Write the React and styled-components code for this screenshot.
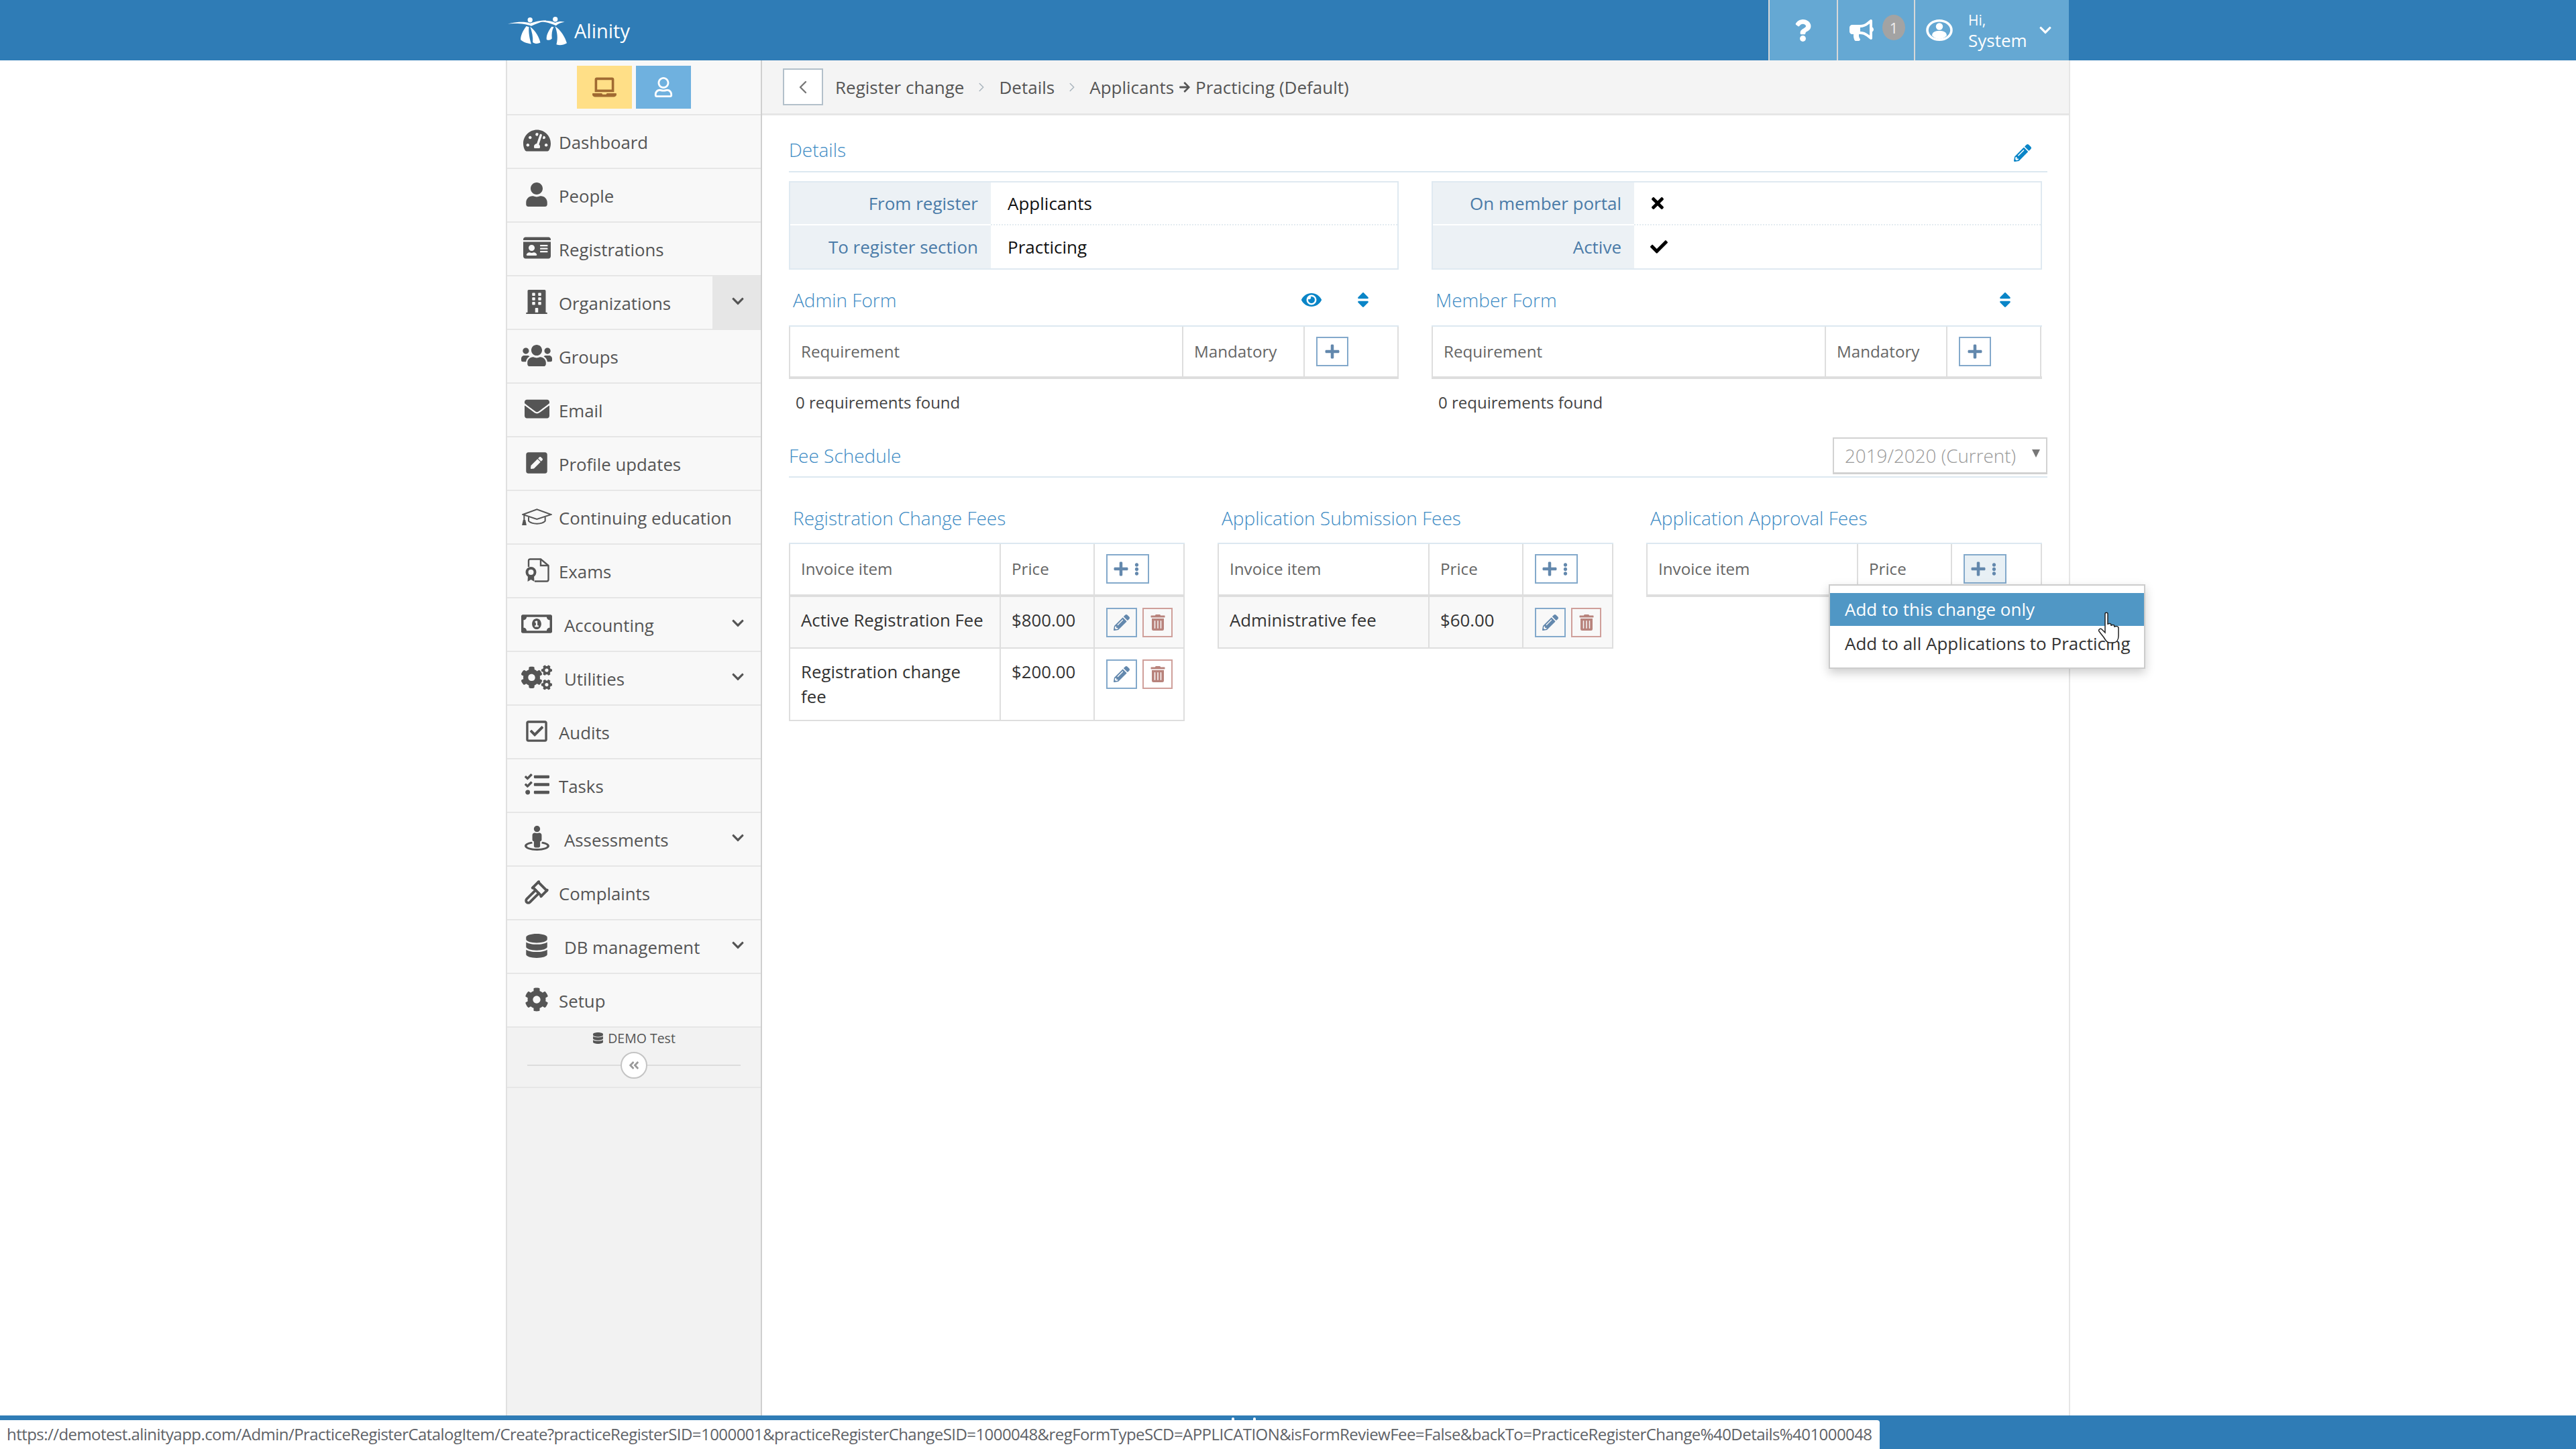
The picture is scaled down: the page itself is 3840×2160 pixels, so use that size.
import React from 'react'
import styled, { createGlobalStyle } from 'styled-components'
import {
  FaTachometerAlt, FaUser, FaIdCard, FaBuilding, FaUsers, FaEnvelope, FaPenSquare,
  FaRegMoneyBillAlt, FaCogs, FaRegCheckSquare, FaTasks, FaStreetView, FaDatabase, FaCog,
  FaQuestion, FaBullhorn, FaLaptop, FaRegUser, FaCheck, FaTimes, FaEye,
  FaSort, FaPencilAlt, FaPlus, FaEllipsisV, FaTrashAlt, FaChevronDown,
  FaAngleDoubleLeft, FaArrowRight,
} from 'react-icons/fa'
import { Gavel, ChevronLeft, ChevronRight } from 'lucide-react'

const GlobalStyle = createGlobalStyle`
  html, body {
    margin: 0;
    height: 2160px;
    overflow: hidden;
    background: #fff;
    font-family: "Open Sans", "Noto Sans", sans-serif;
    font-size: 26px;
    color: #333;
  }
  * { box-sizing: border-box; }
`

const Page = styled.div`
  display: flex;
  flex-direction: column;
  height: 2160px;
  position: relative;
`
const TopBar = styled.header`
  height: 90px;
  background: #2f7cb6;
  display: flex;
  justify-content: center;
`
const TopInner = styled.div`
  width: 2332px;
  display: flex;
  align-items: center;
  justify-content: space-between;
  padding-right: 2px;
`
const Brand = styled.div`
  display: flex;
  align-items: center;
  gap: 11px;
  padding-left: 3px;
  color: #fff;
  font-size: 29px;
`
const TopTools = styled.div`
  display: flex;
  height: 90px;
  background: #65a8d3;
`
const TopTool = styled.div`
  width: ${p => p.$w}px;
  border-left: 2px solid #d8d8d8;
  display: flex;
  align-items: center;
  color: #fff;
  padding-left: ${p => p.$pad}px;
`
const Badge = styled.span`
  width: 34px;
  height: 38px;
  margin-left: 13px;
  margin-top: -8px;
  border-radius: 50%;
  background: #a3a3a3;
  color: #eee;
  font-size: 22px;
  display: flex;
  align-items: center;
  justify-content: center;
`
const Greeting = styled.div`
  margin-left: 23px;
  width: 105px;
  line-height: 30px;
  font-size: 26px;
  small {
    display: block;
    font-size: 21px;
  }
`
const Body = styled.div`
  flex: 1;
  display: flex;
  justify-content: center;
  min-height: 0;
`
const Shell = styled.div`
  width: 2332px;
  display: flex;
`
const Sidebar = styled.nav`
  width: 382px;
  background: #f2f2f2;
  border-left: 2px solid #e0e0e0;
  border-right: 2px solid #cfcfcf;
`
const ModeRow = styled.div`
  height: 82px;
  background: #f8f8f8;
  border-bottom: 2px solid #e6e6e6;
  display: flex;
  justify-content: center;
  gap: 6px;
  padding-top: 8px;
`
const ModeButton = styled.div`
  width: 82px;
  height: 64px;
  background: ${p => p.$bg};
  color: ${p => p.$fg};
  display: flex;
  align-items: center;
  justify-content: center;
`
const NavRow = styled.div`
  height: 80px;
  background: #f8f8f8;
  border-bottom: 2px solid #e6e6e6;
  display: flex;
  align-items: center;
  padding-left: 21px;
  color: #555;
  font-size: 25.8px;
`
const NavIcon = styled.span`
  width: 46px;
  display: flex;
  justify-content: center;
  align-items: center;
  flex: none;
  margin-top: -3px;
`
const NavLabel = styled.span`
  flex: 1;
  margin-top: 1px;
  margin-left: ${p => (p.$wide ? 18 : 10)}px;
`
const NavToggle = styled.span`
  width: 72px;
  height: 78px;
  display: flex;
  align-items: center;
  justify-content: center;
  padding-left: 4px;
  background: ${p => (p.$open ? '#e6e6e6' : 'transparent')};
  svg { width: 20px; height: 20px; margin-top: -4px; }
`
const SideFooter = styled.div`
  height: 90px;
  background: #f2f2f2;
  border-bottom: 2px solid #e6e6e6;
  display: flex;
  flex-direction: column;
  align-items: center;
  color: #555;
  font-size: 19.5px;
`
const DemoTag = styled.div`
  display: flex;
  align-items: center;
  gap: 6px;
  height: 30px;
`
const Collapse = styled.div`
  width: 318px;
  height: 2px;
  background: #dcdcdc;
  margin-top: 25px;
  display: flex;
  align-items: center;
  justify-content: center;
`
const CollapseKnob = styled.span`
  width: 40px;
  height: 40px;
  border: 2px solid #c4c4c4;
  border-radius: 50%;
  background: #fff;
  color: #999;
  display: flex;
  align-items: center;
  justify-content: center;
`
const Main = styled.main`
  width: 1950px;
  border-right: 2px solid #e6e6e6;
  background: #fff;
`
const Crumbs = styled.div`
  height: 82px;
  background: #f4f4f4;
  border-bottom: 3px solid #e6e6e6;
  display: flex;
  align-items: center;
  padding-left: 31px;
  color: #555;
`
const BackButton = styled.span`
  width: 60px;
  height: 55px;
  margin-right: 18px;
  border: 2px solid #b3c0ca;
  background: #fff;
  color: #777;
  display: flex;
  align-items: center;
  justify-content: center;
`
const CrumbSep = styled.span`
  width: 52px;
  display: flex;
  justify-content: center;
  color: #a9b4bd;
`
const CrumbArrow = styled.span`
  display: flex;
  margin: 0 7px;
  color: #555;
`
const Content = styled.div`
  padding-left: 40px;
  width: 1916px;
`
const SectionHead = styled.div`
  height: ${p => p.$h}px;
  border-bottom: 2px solid #dce8f0;
  display: flex;
  align-items: flex-end;
  justify-content: space-between;
  padding-bottom: ${p => p.$pb}px;
`
const SectionTitle = styled.h2`
  margin: 0;
  font-size: 28px;
  font-weight: 300;
  line-height: 36px;
  color: #3d8bc4;
`
const FeeScheduleTitle = styled(SectionTitle)`
  padding-bottom: 13px;
`
const EditLink = styled.span`
  color: #0a85c7;
  margin-right: 24px;
  display: flex;
`
const TwoCols = styled.div`
  width: 1868px;
  display: grid;
  grid-template-columns: 909px 910px;
  column-gap: 49px;
`
const InfoGrid = styled.div`
  margin-top: 13px;
  height: 132px;
  border: 2px solid #dfe9f1;
  display: grid;
  grid-template-columns: ${p => p.$label}px 1fr;
  grid-auto-rows: 1fr;
`
const InfoLabel = styled.div`
  background: #ecf1f5;
  color: #4a7ba8;
  text-align: right;
  padding-right: 19px;
  display: flex;
  align-items: center;
  justify-content: flex-end;
  border-bottom: ${p => (p.$last ? 'none' : '2px solid #fff')};
`
const InfoValue = styled.div`
  color: #111;
  padding-left: ${p => p.$pad || 24}px;
  display: flex;
  align-items: center;
  border-bottom: ${p => (p.$last ? 'none' : '2px dotted #e3ebf1')};
`
const SubHead = styled.div`
  height: ${p => p.$h}px;
  display: flex;
  align-items: center;
  justify-content: space-between;
  padding: ${p => p.$top || 0}px 0 0 6px;
`
const SubTools = styled.div`
  display: flex;
  align-items: center;
  color: #0a85c7;
`
const SubTool = styled.span`
  width: ${p => p.$w}px;
  display: flex;
  justify-content: center;
  margin-right: ${p => p.$mr || 0}px;
`
const DataTable = styled.div`
  border-top: 2px solid #dce8f0;
  position: relative;
`
const DataRow = styled.div`
  display: grid;
  grid-template-columns: ${p => p.$cols};
  min-height: ${p => p.$h}px;
  background: ${p => p.$bg || '#fff'};
  border-bottom: ${p => p.$rule}px solid #dedede;
`
const DataCell = styled.div`
  border-left: 2px solid #dedede;
  &:last-child { border-right: 2px solid #dedede; }
  padding: ${p => p.$py}px 16px 0 ${p => (p.$tools ? 17 : 16)}px;
  color: ${p => (p.$head ? '#666' : '#333')};
  line-height: 37px;
  font-size: ${p => (p.$head ? 24.2 : 25.8)}px;
  display: ${p => (p.$tools ? 'flex' : 'block')};
  gap: 8px;
`
const ToolButton = styled.span`
  width: ${p => p.$w}px;
  height: 44px;
  border: 2px solid ${p => (p.$danger ? '#cf9f9a' : '#83a9cb')};
  color: ${p => (p.$danger ? '#b8837c' : '#6388ad')};
  background: ${p => (p.$active ? '#e8f0f5' : 'transparent')};
  display: flex;
  align-items: center;
  justify-content: center;
  gap: 2px;
`
const CountText = styled.div`
  height: 68px;
  margin-bottom: 2px;
  display: flex;
  align-items: center;
  padding-left: 10px;
  font-size: 24px;
  color: #444;
`
const YearSelect = styled.div`
  width: 320px;
  height: 55px;
  margin-bottom: 3px;
  border: 2px solid #d2d2d2;
  border-bottom-width: 3px;
  color: #999;
  display: flex;
  align-items: center;
  justify-content: space-between;
  padding: 0 9px 0 16px;
  font-weight: 300;
  font-size: 27.8px;
  white-space: nowrap;
`
const SelectArrow = styled.span`
  width: 0;
  height: 0;
  border-left: 6px solid transparent;
  border-right: 6px solid transparent;
  border-top: 12px solid #777;
  margin-top: -6px;
`
const FeeGrid = styled.div`
  width: 1868px;
  display: grid;
  grid-template-columns: repeat(3, 590px);
  column-gap: 49px;
`
const Menu = styled.div`
  position: absolute;
  left: 272px;
  top: 60px;
  width: 472px;
  height: 126px;
  background: #fff;
  border: 2px solid #ccc;
  box-shadow: 0 6px 14px rgba(0, 0, 0, 0.2);
  padding-top: 11px;
  z-index: 3;
`
const MenuItem = styled.div`
  height: ${p => p.$h}px;
  padding-left: 22px;
  padding-bottom: 2px;
  display: flex;
  align-items: center;
  white-space: nowrap;
  background: ${p => (p.$active ? '#5097c5' : 'transparent')};
  color: ${p => (p.$active ? '#fff' : '#333')};
`
const Cursor = styled.svg`
  position: absolute;
  left: 399px;
  top: 39px;
  width: 36px;
  height: 48px;
`
const BottomBar = styled.footer`
  height: 50px;
  background: #2f7cb6;
  position: relative;
`
const FooterMark = styled.span`
  position: absolute;
  top: 3px;
  left: ${p => p.$x}px;
  width: 4px;
  height: 5px;
  border-radius: 2px 2px 0 0;
  background: #fff;
`
const StatusTip = styled.div`
  position: absolute;
  left: 0;
  bottom: 0;
  width: 2802px;
  height: 43px;
  padding-left: 10px;
  background: #fff;
  border-top-right-radius: 4px;
  color: #5f6368;
  font-size: 24px;
  letter-spacing: -0.56px;
  line-height: 42px;
  white-space: nowrap;
`

function AlinityLogo() {
  return (
    <svg width="88" height="45" viewBox="0 0 265 135" fill="#fff">
      <circle cx="100" cy="20" r="11" />
      <circle cx="213" cy="17" r="11" />
      <path d="M0 38C40 27 78 27 100 35C120 28 142 22 172 22L172 25C146 28 130 36 105 47C80 37 40 33 0 38Z" />
      <path d="M140 27C165 20 192 24 213 33C228 26 240 26 255 29C240 31 228 35 216 46C195 36 170 28 140 27Z" />
      <path d="M83 48C68 68 56 92 58 110C72 122 90 126 105 128C98 105 92 75 95 52Z" />
      <path d="M100 50C125 68 142 100 146 122C135 128 122 128 112 120C114 95 108 72 100 50Z" />
      <path d="M197 50C182 68 172 90 174 108C182 112 190 112 198 104C196 85 198 66 206 52Z" />
      <path d="M212 48C240 68 258 100 265 124C250 133 232 135 218 130C226 102 222 75 212 48Z" />
    </svg>
  )
}

function UserBadgeIcon() {
  return (
    <svg width="40" height="32" viewBox="0 0 40 32" fill="#fff">
      <ellipse cx="20" cy="16" rx="18" ry="14.2" fill="none" stroke="#fff" strokeWidth="3.6" />
      <circle cx="20" cy="10.5" r="5.2" />
      <path d="M9 24C9.5 18.5 14 17 20 17C26 17 30.5 18.5 31 24C28 27.5 24 29 20 29C16 29 12 27.5 9 24Z" />
    </svg>
  )
}

function CapIcon() {
  return (
    <svg width="45" height="28" viewBox="0 0 135 80" fill="none" stroke="#555" strokeWidth="6">
      <path d="M4 31L67 8L131 31L67 52Z" />
      <path d="M30 42V60C45 76 90 76 104 60V42" />
      <path d="M10 34V58" />
      <path d="M4 76L8 58H13L17 76Z" fill="#555" />
    </svg>
  )
}

function ExamIcon() {
  return (
    <svg width="37" height="36" viewBox="0 0 37 36" fill="none" stroke="#555" strokeWidth="2.4">
      <path d="M6 13V4C6 2.5 7 1.5 8.5 1.5H24L35.5 11V32C35.5 33.5 34.5 34.5 33 34.5H15" />
      <path d="M24 1.5V11H35.5" />
      <circle cx="9.5" cy="21" r="6" strokeWidth="4" />
      <path d="M5 26L4.5 35L9.5 32L14.5 35L14 26Z" fill="#555" stroke="none" />
    </svg>
  )
}

function HandCursor() {
  return (
    <Cursor viewBox="0 0 36 48">
      <path
        d="M11 3C11 0.5 15 0.5 15 3V19C15 17 20 17 20 19.5V21C20 19 25 19 25 21.5V23C25 21 31 21 31 24V36C31 42 28 46 23 46H18C14 46 12 43 9 38L2 29C0.5 26.5 4 24 6 26L11 31Z"
        fill="#fff"
        stroke="#222"
        strokeWidth="1.5"
      />
    </Cursor>
  )
}

const navItems = [
  { label: 'Dashboard', icon: <FaTachometerAlt size={41} /> },
  { label: 'People', icon: <FaUser size={36} /> },
  { label: 'Registrations', icon: <FaIdCard size={41} /> },
  { label: 'Organizations', icon: <FaBuilding size={36} />, toggle: 'open' },
  { label: 'Groups', icon: <FaUsers size={46} /> },
  { label: 'Email', icon: <FaEnvelope size={37} /> },
  { label: 'Profile updates', icon: <FaPenSquare size={36} /> },
  { label: 'Continuing education', icon: <CapIcon /> },
  { label: 'Exams', icon: <ExamIcon /> },
  { label: 'Accounting', icon: <FaRegMoneyBillAlt size={46} />, toggle: 'closed', wide: true },
  { label: 'Utilities', icon: <FaCogs size={46} />, toggle: 'closed', wide: true },
  { label: 'Audits', icon: <FaRegCheckSquare size={36} /> },
  { label: 'Tasks', icon: <FaTasks size={37} /> },
  { label: 'Assessments', icon: <FaStreetView size={37} />, toggle: 'closed', wide: true },
  { label: 'Complaints', icon: <Gavel size={38} strokeWidth={2.4} /> },
  { label: 'DB management', icon: <FaDatabase size={36} />, toggle: 'closed', wide: true },
  { label: 'Setup', icon: <FaCog size={36} /> },
]

const feeTables = [
  {
    title: 'Registration Change Fees',
    active: false,
    rows: [
      { name: 'Active Registration Fee', price: '$800.00', h: 77, bg: '#f8f8f8' },
      { name: 'Registration change fee', price: '$200.00', h: 108 },
    ],
  },
  {
    title: 'Application Submission Fees',
    active: false,
    rows: [{ name: 'Administrative fee', price: '$60.00', h: 77, bg: '#f8f8f8' }],
  },
  { title: 'Application Approval Fees', active: true, rows: [] },
]

const FEE_COLS = '314px 140px 136px'
const FORM_COLS = '586px 181px 142px'

function FormTable() {
  return (
    <>
      <DataTable>
        <DataRow $cols={FORM_COLS} $h={78} $rule={4}>
          <DataCell $head $py={18}>Requirement</DataCell>
          <DataCell $head $py={18}>Mandatory</DataCell>
          <DataCell $tools $py={15}>
            <ToolButton $w={48}><FaPlus size={24} /></ToolButton>
          </DataCell>
        </DataRow>
      </DataTable>
      <CountText>0 requirements found</CountText>
    </>
  )
}

function FeeTable({ table }) {
  return (
    <div>
      <SubHead $h={97} $top={23}>
        <SectionTitle>{table.title}</SectionTitle>
      </SubHead>
      <DataTable>
        <DataRow $cols={FEE_COLS} $h={79} $rule={4}>
          <DataCell $head $py={18}>Invoice item</DataCell>
          <DataCell $head $py={18}>Price</DataCell>
          <DataCell $tools $py={15}>
            <ToolButton $w={64} $active={table.active}>
              <FaPlus size={24} />
              <FaEllipsisV size={19} />
            </ToolButton>
          </DataCell>
        </DataRow>
        {table.rows.map(row => (
          <DataRow key={row.name} $cols={FEE_COLS} $h={row.h} $bg={row.bg} $rule={2}>
            <DataCell $py={16}>{row.name}</DataCell>
            <DataCell $py={16}>{row.price}</DataCell>
            <DataCell $tools $py={16}>
              <ToolButton $w={47}><FaPencilAlt size={24} /></ToolButton>
              <ToolButton $w={45} $danger><FaTrashAlt size={24} /></ToolButton>
            </DataCell>
          </DataRow>
        ))}
        {table.active && (
          <Menu>
            <MenuItem $active $h={49}>Add to this change only</MenuItem>
            <MenuItem $h={54}>Add to all Applications to Practicing</MenuItem>
            <HandCursor />
          </Menu>
        )}
      </DataTable>
    </div>
  )
}

export default function App() {
  return (
    <Page>
      <GlobalStyle />
      <TopBar>
        <TopInner>
          <Brand>
            <AlinityLogo />
            Alinity
          </Brand>
          <TopTools>
            <TopTool $w={102} $pad={33}><FaQuestion size={33} /></TopTool>
            <TopTool $w={115} $pad={17}>
              <FaBullhorn size={36} />
              <Badge>1</Badge>
            </TopTool>
            <TopTool $w={231} $pad={16}>
              <UserBadgeIcon />
              <Greeting><small>Hi,</small>System</Greeting>
              <FaChevronDown size={20} />
            </TopTool>
          </TopTools>
        </TopInner>
      </TopBar>
      <Body>
        <Shell>
          <Sidebar>
            <ModeRow>
              <ModeButton $bg="#ffdf87" $fg="#a06a32"><FaLaptop size={36} /></ModeButton>
              <ModeButton $bg="#6fb1df" $fg="#fff"><FaRegUser size={30} /></ModeButton>
            </ModeRow>
            {navItems.map(item => (
              <NavRow key={item.label}>
                <NavIcon>{item.icon}</NavIcon>
                <NavLabel $wide={item.wide}>{item.label}</NavLabel>
                {item.toggle && (
                  <NavToggle $open={item.toggle === 'open'}><FaChevronDown /></NavToggle>
                )}
              </NavRow>
            ))}
            <SideFooter>
              <DemoTag><FaDatabase size={17} />DEMO Test</DemoTag>
              <Collapse>
                <CollapseKnob><FaAngleDoubleLeft size={18} /></CollapseKnob>
              </Collapse>
            </SideFooter>
          </Sidebar>
          <Main>
            <Crumbs>
              <BackButton><ChevronLeft size={32} strokeWidth={1.8} /></BackButton>
              Register change
              <CrumbSep><ChevronRight size={22} strokeWidth={1.6} /></CrumbSep>
              Details
              <CrumbSep><ChevronRight size={22} strokeWidth={1.6} /></CrumbSep>
              Applicants
              <CrumbArrow><FaArrowRight size={18} /></CrumbArrow>
              Practicing (Default)
            </Crumbs>
            <Content>
              <SectionHead $h={85} $pb={14}>
                <SectionTitle>Details</SectionTitle>
                <EditLink><FaPencilAlt size={26} /></EditLink>
              </SectionHead>
              <TwoCols>
                <InfoGrid $label={299}>
                  <InfoLabel>From register</InfoLabel>
                  <InfoValue $pad={25}>Applicants</InfoValue>
                  <InfoLabel $last>To register section</InfoLabel>
                  <InfoValue $pad={25} $last>Practicing</InfoValue>
                </InfoGrid>
                <InfoGrid $label={300}>
                  <InfoLabel>On member portal</InfoLabel>
                  <InfoValue $pad={22}><FaTimes size={26} color="#000" /></InfoValue>
                  <InfoLabel $last>Active</InfoLabel>
                  <InfoValue $last><FaCheck size={26} color="#000" /></InfoValue>
                </InfoGrid>
                <div>
                  <SubHead $h={83} $top={7}>
                    <SectionTitle>Admin Form</SectionTitle>
                    <SubTools>
                      <SubTool $w={32} $mr={52}><FaEye size={30} /></SubTool>
                      <SubTool $w={18} $mr={44}><FaSort size={28} /></SubTool>
                    </SubTools>
                  </SubHead>
                  <FormTable />
                </div>
                <div>
                  <SubHead $h={83} $top={7}>
                    <SectionTitle>Member Form</SectionTitle>
                    <SubTools>
                      <SubTool $w={18} $mr={46}><FaSort size={28} /></SubTool>
                    </SubTools>
                  </SubHead>
                  <FormTable />
                </div>
              </TwoCols>
              <SectionHead $h={77} $pb={0}>
                <FeeScheduleTitle>Fee Schedule</FeeScheduleTitle>
                <YearSelect>2019/2020 (Current)<SelectArrow /></YearSelect>
              </SectionHead>
              <FeeGrid>
                {feeTables.map(table => <FeeTable key={table.title} table={table} />)}
              </FeeGrid>
            </Content>
          </Main>
        </Shell>
      </Body>
      <BottomBar>
        <FooterMark $x={1836} />
        <FooterMark $x={1868} />
        <StatusTip>
          https://demotest.alinityapp.com/Admin/PracticeRegisterCatalogItem/Create?practiceRegisterSID=1000001&amp;practiceRegisterChangeSID=1000048&amp;regFormTypeSCD=APPLICATION&amp;isFormReviewFee=False&amp;backTo=PracticeRegisterChange%40Details%401000048
        </StatusTip>
      </BottomBar>
    </Page>
  )
}
